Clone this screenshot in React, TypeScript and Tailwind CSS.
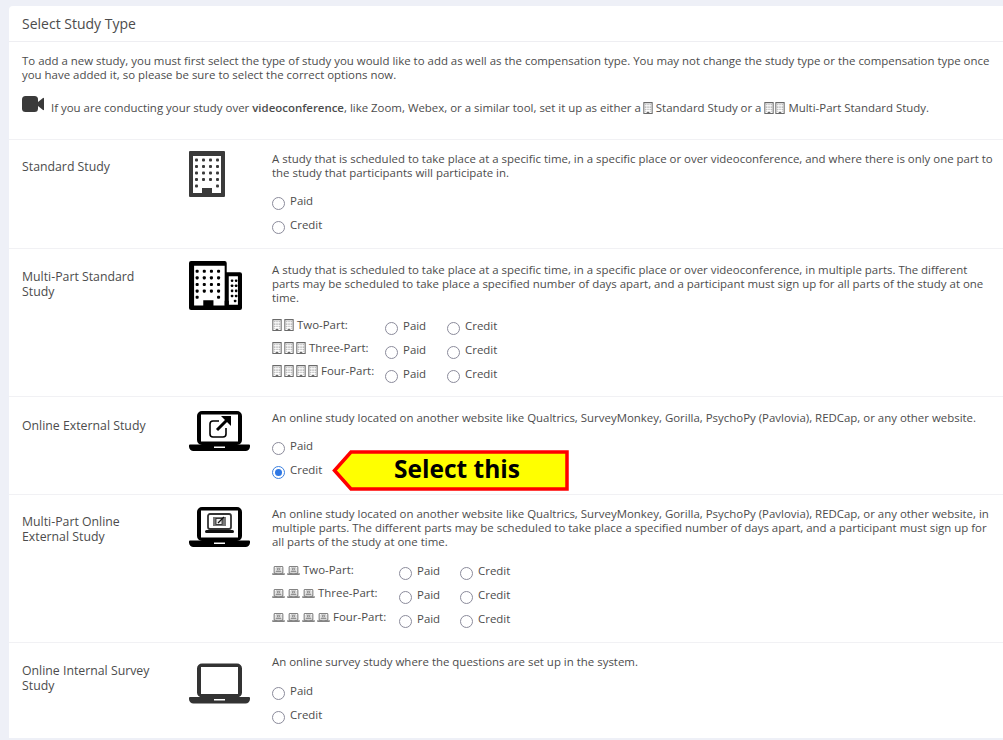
import React from "react";

const Building = ({ className = "" }: { className?: string }) => (
  <svg viewBox="0 0 36 46" className={className}>
    <path fill="#3a3a3a" fillRule="evenodd" d="M1 0h34a1 1 0 0 1 1 1v44a1 1 0 0 1-1 1H1a1 1 0 0 1-1-1V1a1 1 0 0 1 1-1zM4 5v37h9v-5h10v5h9V5z" />
    {[9, 15.500, 22, 28.500].map((y) =>
      [7.500, 14.500, 21.500, 28.500].map((x) => <rect key={`${x}-${y}`} x={x - 1.500} y={y - 1.500} width="3" height="3" rx="1" fill="#3a3a3a" />)
    )}
    <rect x="6" y="33.500" width="3" height="3" rx="1" fill="#3a3a3a" />
    <rect x="27" y="33.500" width="3" height="3" rx="1" fill="#3a3a3a" />
  </svg>
);

const Buildings = () => (
  <svg viewBox="0 0 52 48" className="w-[53px] h-[49px]">
    <path fill="#000" fillRule="evenodd" d="M2 0h33a2 2 0 0 1 2 2v9h13a2 2 0 0 1 2 2v33a2 2 0 0 1-2 2H2a2 2 0 0 1-2-2V2a2 2 0 0 1 2-2zM5 4.500v39h9v-5h10v5h11V4.500zM39 15v28h9V15z" />
    <rect x="35" y="39" width="4" height="5" fill="#000" />
    {[10, 16.500, 23, 29.500].map((y) =>
      [8, 15, 22, 29].map((x) => <rect key={`${x}-${y}`} x={x - 1.500} y={y - 1.500} width="3" height="3" rx="1" fill="#000" />)
    )}
    <rect x="6.500" y="34" width="3" height="3" rx="1" fill="#000" />
    <rect x="27.500" y="34" width="3" height="3" rx="1" fill="#000" />
    {[18, 23, 28, 33].map((y) =>
      [41, 45].map((x) => <rect key={`${x}-${y}`} x={x} y={y} width="2.500" height="2.500" rx="0.800" fill="#000" />)
    )}
    <rect x="44" y="38" width="2.500" height="2.500" rx="0.800" fill="#000" />
  </svg>
);

const Laptop = ({ inner, color = "#000", className = "w-[61px] h-[40px]" }: { inner?: "link" | "nested"; color?: string; className?: string }) => (
  <svg viewBox="0 0 61 40" className={className}>
    <path fill={color} fillRule="evenodd" d="M13 0h35a5 5 0 0 1 5 5v24a5 5 0 0 1-5 5H13a5 5 0 0 1-5-5V5a5 5 0 0 1 5-5zM12 3.500v27h37v-27z" />
    <path fill={color} fillRule="evenodd" d="M1 33.500h59a1 1 0 0 1 1 1v1a4.500 4.500 0 0 1-4.500 4.500H4.500A4.500 4.500 0 0 1 0 35.500v-1a1 1 0 0 1 1-1zM25 35.500v1.500h11v-1.500z" />
    {inner === "link" && (
      <g fill="none" stroke={color}>
        <path strokeWidth="1.600" d="M30 10h-6a3 3 0 0 0-3 3v10a3 3 0 0 0 3 3h10a3 3 0 0 0 3-3v-6" />
        <path strokeWidth="3" d="M28 19l11-11" />
        <path fill={color} stroke="none" d="M32 5h10v10z" />
      </g>
    )}
    {inner === "nested" && (
      <g>
        <rect x="19" y="7" width="23" height="15" rx="2" fill="none" stroke="#333" strokeWidth="1.800" />
        <rect x="24" y="10" width="13" height="9" fill="#777" />
        <rect x="27" y="11.500" width="6" height="6" fill="#eee" stroke="#222" strokeWidth="0.800" />
        <path d="M29 16l6-6" stroke="#111" strokeWidth="1.300" />
        <rect x="16" y="23" width="29" height="3" rx="1.500" fill="#111" />
      </g>
    )}
  </svg>
);

const TinyBuilding = ({ className = "" }: { className?: string }) => <Building className={`inline-block h-[12px] w-[10px] align-[-2px] opacity-75 ${className}`} />;

const TinyLaptop = () => <Laptop inner="nested" color="#333" className="inline-block h-[9px] w-[13px] align-[-1px] opacity-80" />;

const Radio = ({ checked = false }: { checked?: boolean }) => (
  <span className={`mt-[3px] flex h-[13px] w-[13px] shrink-0 items-center justify-center rounded-full border ${checked ? "border-[#3b7fe0]" : "border-[#8b8b9b]"}`}>
    {checked && <span className="h-[7px] w-[7px] rounded-full bg-[#2f78e4]" />}
  </span>
);

const Option = ({ label, checked = false }: { label: string; checked?: boolean }) => (
  <label className="flex items-start gap-[5px] leading-[16px]">
    <Radio checked={checked} />
    <span className="-mt-[1px]">{label}</span>
  </label>
);

const PaidCredit = ({ credit = false, className = "mt-[14px]" }: { credit?: boolean; className?: string }) => (
  <div className={`flex flex-col gap-[8px] ${className}`}>
    <Option label="Paid" />
    <Option label="Credit" checked={credit} />
  </div>
);

const PartRow = ({ icons, label, width, lift, paidWidth = "w-[62px]" }: { icons: React.ReactNode; label: string; width: string; lift: string; paidWidth?: string }) => (
  <div className="flex h-[24px] items-start">
    <div className={`flex items-center gap-[2px] leading-[16px] ${width} ${lift}`}>
      {icons}
      <span className="ml-[1px]">{label}</span>
    </div>
    <div className={paidWidth}><Option label="Paid" /></div>
    <Option label="Credit" />
  </div>
);

const StudyRow = ({ title, icon, height, titlePad, iconPad, bodyPad, children }: { title: React.ReactNode; icon: React.ReactNode; height: string; titlePad: string; iconPad: string; bodyPad: string; children: React.ReactNode }) => (
  <div className={`relative flex border-t border-[#f1f1f4] pl-[13px] ${height}`}>
    <div className={`w-[166px] shrink-0 pr-[20px] text-[12.300px] leading-[15px] ${titlePad}`}>{title}</div>
    <div className={`flex w-[84px] shrink-0 ${iconPad}`}>{icon}</div>
    <div className={`flex-1 pr-[9px] ${bodyPad}`}>{children}</div>
  </div>
);

export default function App() {
  return (
    <div className="h-[740px] overflow-hidden bg-[#eef0f7] pl-[9px] pt-[6px] text-[#4c4c4c] [font-family:'Open_Sans',sans-serif] text-[11.450px]">
      <div className="rounded-tl-[4px] bg-white">
        <div className="flex h-[36px] items-center border-b border-[#eeeef2] px-[13px] text-[14px]">Select Study Type</div>

        <div className="h-[97px] px-[13px] pt-[12px] leading-[14px]">
          <p>
            To add a new study, you must first select the type of study you would like to add as well as the compensation type. You may not change the study type or the compensation type once
            you have added it, so please be sure to select the correct options now.
          </p>
          <div className="mt-[14px] flex items-start gap-[7px]">
            <svg viewBox="0 0 22 16" className="h-[16px] w-[22px] shrink-0">
              <rect x="0" y="0" width="16" height="16" rx="3.500" fill="#3a3a3a" />
              <path d="M16 6l5-4a.6.6 0 0 1 1 .5v11a.6.6 0 0 1-1 .5l-5-4z" fill="#3a3a3a" />
            </svg>
            <p className="mt-[5px]">
              If you are conducting your study over <span className="font-semibold">videoconference</span>, like Zoom, Webex, or a similar tool, set it up as either a <TinyBuilding className="-ml-[1px]" /> Standard Study or a <TinyBuilding /><TinyBuilding className="ml-[1px]" /> Multi-Part Standard Study.
            </p>
          </div>
        </div>

        <StudyRow title="Standard Study" height="h-[109px]" titlePad="pt-[19px]" iconPad="pt-[11px]" bodyPad="pt-[12px]" icon={<span className="ml-[1px]"><Building className="h-[46px] w-[36px]" /></span>}>
          <p className="leading-[14px]">A study that is scheduled to take place at a specific time, in a specific place or over videoconference, and where there is only one part to the study that participants will participate in.</p>
          <PaidCredit />
        </StudyRow>

        <StudyRow title="Multi-Part Standard Study" height="h-[148px]" titlePad="pt-[20px]" iconPad="pt-[12px]" bodyPad="pt-[14px]" icon={<span className="ml-[1px]"><Buildings /></span>}>
          <p className="leading-[14px]">A study that is scheduled to take place at a specific time, in a specific place or over videoconference, in multiple parts. The different parts may be scheduled to take place a specified number of days apart, and a participant must sign up for all parts of the study at one time.</p>
          <div className="mt-[14px]">
            <PartRow width="w-[113px]" lift="-mt-[2px]" label="Two-Part:" icons={<><TinyBuilding /><TinyBuilding /></>} />
            <PartRow width="w-[113px]" lift="-mt-[3px]" label="Three-Part:" icons={<><TinyBuilding /><TinyBuilding /><TinyBuilding /></>} />
            <PartRow width="w-[113px]" lift="-mt-[4px]" label="Four-Part:" icons={<><TinyBuilding /><TinyBuilding /><TinyBuilding /><TinyBuilding /></>} />
          </div>
        </StudyRow>

        <StudyRow title="Online External Study" height="h-[98px]" titlePad="pt-[21px]" iconPad="pt-[14px]" bodyPad="pt-[14px]" icon={<span className="ml-[1px]"><Laptop inner="link" /></span>}>
          <p className="leading-[14px]">An online study located on another website like Qualtrics, SurveyMonkey, Gorilla, PsychoPy (Pavlovia), REDCap, or any other website.</p>
          <PaidCredit credit className="mt-[14px]" />
          {/* callout sits on top of the row */}
          <div className="absolute left-[323px] top-[51px] flex h-[44px] w-[238px] items-center justify-center pb-[2px] pl-[12px]">
            <svg viewBox="0 0 238 44" className="absolute inset-0 h-full w-full">
              <path d="M235 4H19L2.500 22.500 19 41h216z" fill="#ffff00" stroke="#ff0000" strokeWidth="3.500" />
            </svg>
            <span className="relative text-[24.500px] font-bold text-black">Select this</span>
          </div>
        </StudyRow>

        <StudyRow title="Multi-Part Online External Study" height="h-[148px]" titlePad="pt-[19px]" iconPad="pt-[12px]" bodyPad="pt-[12px]" icon={<span className="ml-[1px]"><Laptop inner="nested" /></span>}>
          <p className="leading-[14px]">An online study located on another website like Qualtrics, SurveyMonkey, Gorilla, PsychoPy (Pavlovia), REDCap, or any other website, in multiple parts. The different parts may be scheduled to take place a specified number of days apart, and a participant must sign up for all parts of the study at one time.</p>
          <div className="mt-[15px]">
            <PartRow width="w-[127px]" lift="-mt-[2px]" paidWidth="w-[61px]" label="Two-Part:" icons={<><TinyLaptop /><TinyLaptop /></>} />
            <PartRow width="w-[127px]" lift="-mt-[3px]" paidWidth="w-[61px]" label="Three-Part:" icons={<><TinyLaptop /><TinyLaptop /><TinyLaptop /></>} />
            <PartRow width="w-[127px]" lift="-mt-[3px]" paidWidth="w-[61px]" label="Four-Part:" icons={<><TinyLaptop /><TinyLaptop /><TinyLaptop /><TinyLaptop /></>} />
          </div>
        </StudyRow>

        <StudyRow title="Online Internal Survey Study" height="h-[96px]" titlePad="pt-[20px]" iconPad="pt-[20px]" bodyPad="pt-[12px]" icon={<span className="ml-[1px]"><Laptop color="#333" className="h-[41px] w-[61px]" /></span>}>
          <p className="leading-[14px]">An online survey study where the questions are set up in the system.</p>
          <PaidCredit className="mt-[15px]" />
        </StudyRow>
      </div>
    </div>
  );
}
